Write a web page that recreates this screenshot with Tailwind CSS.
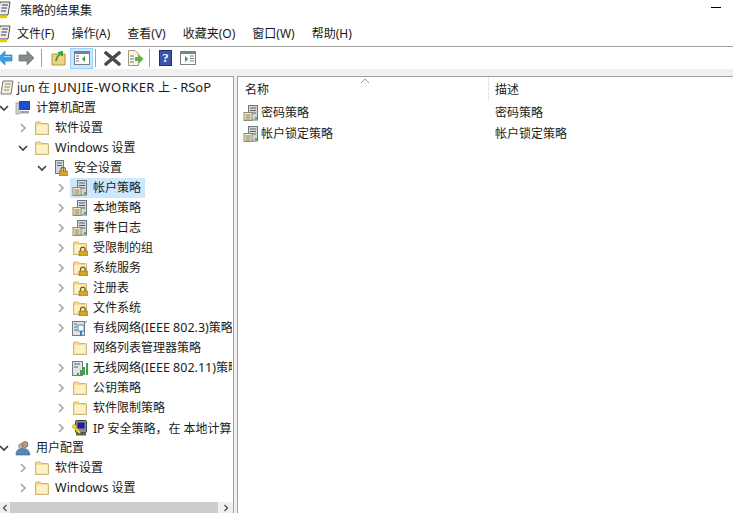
<!DOCTYPE html>
<html lang="zh">
<head>
  <meta charset="UTF-8">
  <title>策略的结果集</title>
  <script src="https://cdn.jsdelivr.net/npm/@tailwindcss/browser@4"></script>
</head>
<body class="w-[733px] h-[513px] overflow-hidden bg-white text-[12px] text-[#1a1a1a] font-['Noto_Sans','Noto_Sans_CJK_SC',sans-serif]">

  <!-- icon defs -->
  <svg class="hidden">
    <symbol id="folder" viewBox="0 0 16 16">
      <path d="M1.500 14.500V3Q1.500 2 2.500 2H6L7.500 3.500H13.500Q14.500 3.500 14.500 4.500V14.500Z" fill="#f5d98c" stroke="#cdb478"/>
      <path d="M2.500 5H13.500V13.500H2.500Z" fill="#fdf1c8"/>
    </symbol>
    <symbol id="lock" viewBox="0 0 16 16">
      <path d="M1.500 14.500V3Q1.500 2 2.500 2H6L7.500 3.500H13.500Q14.500 3.500 14.500 4.500V14.500Z" fill="#f5d98c" stroke="#cdb478"/>
      <path d="M2.500 5H13.500V13.500H2.500Z" fill="#fdf1c8"/>
      <path d="M8.500 11V9.500A2.300 2.300 0 0 1 13.100 9.500V11" fill="none" stroke="#7a5c18" stroke-width="1.200"/>
      <rect x="7" y="11" width="8.500" height="5" fill="#d9a520" stroke="#8a6a1f" stroke-width=".6"/>
    </symbol>
    <symbol id="policy" viewBox="0 0 16 16">
      <rect x="5.500" y=".5" width="9" height="14.500" fill="#d4d8dc" stroke="#6d7680"/>
      <path d="M7 3H13M7 5.500H13M7 8H13" stroke="#59626b"/>
      <rect x="1" y="7.500" width="8" height="8" fill="#f6ecc4" stroke="#8e8a70"/>
      <path d="M2.500 10H7.500M2.500 12H7.500M2.500 14H7.500" stroke="#7c7a66"/>
      <rect x="12" y="12" width="2" height="2" fill="#3fbf3f"/>
    </symbol>
    <symbol id="serverlock" viewBox="0 0 16 16">
      <rect x="2.500" y=".5" width="8" height="13" fill="#d4d8dc" stroke="#6d7680"/>
      <path d="M4 3H9M4 5.500H9" stroke="#59626b"/>
      <path d="M8 11V9.500A2.200 2.200 0 0 1 12.400 9.500V11" fill="none" stroke="#8a6a1f" stroke-width="1.200"/>
      <rect x="6.500" y="11" width="8" height="5" fill="#d9a520" stroke="#8a6a1f" stroke-width=".6"/>
    </symbol>
    <symbol id="wired" viewBox="0 0 16 16">
      <rect x=".5" y="1.500" width="12" height="14" fill="#dfe3e6" stroke="#747c84"/>
      <path d="M2 4H5M2 7H5M2 10H5" stroke="#59626b"/>
      <rect x="6" y="5" width="6" height="6" fill="#fff" stroke="#3f8fbf"/>
      <path d="M9 11V15" stroke="#2f7fb5" stroke-width="2"/>
      <path d="M13 3L15 1" stroke="#888"/>
    </symbol>
    <symbol id="wireless" viewBox="0 0 16 16">
      <rect x=".5" y="1.500" width="10" height="14" fill="#dfe3e6" stroke="#747c84"/>
      <path d="M2 4H8M2 7H6" stroke="#59626b"/>
      <path d="M5 15V13H7V15ZM8 15V10H10V15ZM11 15V7H13V15ZM14 15V3H16V15Z" fill="#3fa63f"/>
    </symbol>
    <symbol id="ipsec" viewBox="0 0 16 16">
      <rect x="3.500" y=".5" width="11" height="12" rx="1" fill="#8b8f8b" stroke="#3e423e"/>
      <rect x="5.500" y="2.500" width="7" height="6" fill="#1e1e9e"/>
      <rect x="4" y="12.500" width="10" height="3" fill="#5c605c"/>
      <path d="M1 6L8 13" stroke="#f2e21a" stroke-width="2"/>
      <circle cx="2.500" cy="6.500" r="2" fill="#f2e21a" stroke="#8a8410" stroke-width=".5"/>
    </symbol>
    <symbol id="closed" viewBox="0 0 10 10"><path d="M3 1L7 5L3 9" fill="none" stroke="#a6a6a6" stroke-width="1.600"/></symbol>
    <symbol id="open" viewBox="0 0 10 10"><path d="M1 3L5 7L9 3" fill="none" stroke="#404040" stroke-width="1.600"/></symbol>
    <symbol id="scroll" viewBox="0 0 16 19">
      <path d="M4 1H14L12 14H2Z" fill="#f4efd8" stroke="#555"/>
      <path d="M6 4H12M5.500 7H11M5 10H10" stroke="#2a2ab0" stroke-width="1.200"/>
      <path d="M1 16H11" stroke="#e8c800" stroke-width="2.400"/>
    </symbol>
  </svg>

  <!-- title bar -->
  <div class="h-[21px] flex items-center relative">
    <svg class="w-4 h-[19px] -ml-1 shrink-0"><use href="#scroll"/></svg>
    <span class="ml-2">策略的结果集</span>
    <div class="absolute right-[12px] top-[7px] w-[10px] h-px bg-black"></div>
  </div>

  <!-- menu bar -->
  <div class="h-[26px] flex items-center border-b border-[#a0a0a0] pt-[1px]">
    <svg class="w-4 h-[19px] -ml-1 shrink-0"><use href="#scroll"/></svg>
    <div class="flex ml-[5px] gap-[17px]">
      <span>文件(F)</span><span>操作(A)</span><span>查看(V)</span><span>收藏夹(O)</span><span>窗口(W)</span><span>帮助(H)</span>
    </div>
  </div>

  <!-- toolbar -->
  <div class="h-[22px] flex items-center">
    <svg class="w-[13px] h-4 shrink-0" viewBox="0 0 13 16"><path d="M5 1L-2 8L5 15V11H12V5H5Z" fill="#35a2ea" stroke="#1d70b0" stroke-width=".6"/><path d="M4 6.500H11" stroke="#a8dcfa"/></svg>
    <svg class="w-[17px] h-4 ml-[5px] shrink-0" viewBox="0 0 17 16"><path d="M1 5H9V1L16 8L9 15V11H1Z" fill="#858a8a" stroke="#5d6060" stroke-width=".6"/></svg>
    <div class="w-px h-[18px] bg-[#a0a0a0] ml-[6px]"></div>
    <svg class="w-[15px] h-4 ml-[9px] shrink-0" viewBox="0 0 15 16"><path d="M1 4H14V15H1Z" fill="#f1d083" stroke="#b8953f"/><path d="M5 11Q6 5 10 4M7 3L11 2L11 6" fill="none" stroke="#2fa02f" stroke-width="1.800"/></svg>
    <div class="w-[23px] h-[21px] ml-[4px] flex items-center justify-center bg-[#cce8ff] border border-[#99d1ff]">
      <svg class="w-4 h-[14px]" viewBox="0 0 16 14"><rect x=".5" y=".5" width="15" height="13" fill="#fff" stroke="#7a8288"/><rect x="1" y="1" width="14" height="2" fill="#7a8288"/><path d="M2 5H5M2 7.500H5M2 10H5" stroke="#6a7a88"/><path d="M11 5V11L8 8Z" fill="#2fa02f"/></svg>
    </div>
    <div class="w-px h-[18px] bg-[#a0a0a0] ml-[2px]"></div>
    <svg class="w-[17px] h-[15px] ml-[8px] shrink-0" viewBox="0 0 17 15"><path d="M2 2L15 13M15 2L2 13" stroke="#4a4a4a" stroke-width="3.600" stroke-linecap="round"/></svg>
    <svg class="w-[17px] h-4 ml-[6px] shrink-0" viewBox="0 0 17 16"><path d="M1.500 .5H8L11.500 4V15.500H1.500Z" fill="#f8f4e4" stroke="#a09a80"/><path d="M3 6H7M3 9H7M3 12H7" stroke="#777"/><path d="M8 7H12V4.500L16.500 9L12 13.500V11H8Z" fill="#55b845"/></svg>
    <div class="w-px h-[18px] bg-[#a0a0a0] ml-[5px]"></div>
    <div class="w-[13px] h-4 ml-[9px] bg-[#3c55a8] border border-[#1f2f70] text-white font-bold text-[13px] leading-[14px] text-center font-['Liberation_Serif',serif]">?</div>
    <svg class="w-4 h-[14px] ml-[8px] shrink-0" viewBox="0 0 16 14"><rect x=".5" y=".5" width="15" height="13" fill="#fff" stroke="#7a8288"/><rect x="1" y="1" width="14" height="2" fill="#7a8288"/><path d="M10 5H14M10 7.500H14M10 10H14" stroke="#6a7a88"/><path d="M5 5V11L8 8Z" fill="#2fa02f"/></svg>
  </div>

  <!-- panes -->
  <div class="h-[444px] bg-[#f0f0f0] pt-[7px] flex">
    <!-- tree -->
    <div class="w-[234px] h-full shrink-0 bg-white border-t border-r border-[#a0a0a0] flex flex-col relative">
      <div class="flex-1 overflow-hidden pt-[1px] w-[232px]">
        <div class="h-5 flex items-center whitespace-nowrap"><svg class="w-4 h-4 -ml-[1px] shrink-0" viewBox="0 0 16 16"><path d="M4 1H14L12 14H2Z" fill="#f4efd8" stroke="#777"/><path d="M6 4H12M5.500 7H11M5 10H10" stroke="#888"/></svg><span class="ml-[2px]">jun 在 <span class="text-[13px] tracking-[.45px]">JUNJIE-WORKER</span> 上 - <span class="text-[13px]">RSoP</span></span></div>

        <div class="h-5 flex items-center whitespace-nowrap"><svg class="w-2.5 h-2.5 ml-[-1px] shrink-0"><use href="#open"/></svg><svg class="w-4 h-4 ml-[6px] shrink-0" viewBox="0 0 16 16"><rect x="4.500" y="1.500" width="10" height="8" fill="#1a4fd0" stroke="#444"/><rect x="1" y="3" width="3" height="11" fill="#d8dce0" stroke="#777" stroke-width=".6"/><rect x="5" y="11" width="9" height="2.500" fill="#9aa4ae"/></svg><span class="ml-[5px]">计算机配置</span></div>

        <div class="h-5 flex items-center whitespace-nowrap"><svg class="w-2.5 h-2.5 ml-[18px] shrink-0"><use href="#closed"/></svg><svg class="w-4 h-4 ml-[6px] shrink-0"><use href="#folder"/></svg><span class="ml-[5px]">软件设置</span></div>
        <div class="h-5 flex items-center whitespace-nowrap"><svg class="w-2.5 h-2.5 ml-[18px] shrink-0"><use href="#open"/></svg><svg class="w-4 h-4 ml-[6px] shrink-0"><use href="#folder"/></svg><span class="ml-[5px]"><span class="text-[12.500px]">Windows</span> 设置</span></div>
        <div class="h-5 flex items-center whitespace-nowrap"><svg class="w-2.5 h-2.5 ml-[37px] shrink-0"><use href="#open"/></svg><svg class="w-4 h-4 ml-[6px] shrink-0"><use href="#serverlock"/></svg><span class="ml-[5px]">安全设置</span></div>

        <div class="h-5 flex items-center whitespace-nowrap"><svg class="w-2.5 h-2.5 ml-[56px] shrink-0"><use href="#closed"/></svg><div class="flex items-center h-5 bg-[#cce8ff] ml-[4px] pl-[2px] pr-[4px]"><svg class="w-4 h-4 shrink-0"><use href="#policy"/></svg><span class="ml-[5px]">帐户策略</span></div></div>
        <div class="h-5 flex items-center whitespace-nowrap"><svg class="w-2.5 h-2.5 ml-[56px] shrink-0"><use href="#closed"/></svg><svg class="w-4 h-4 ml-[6px] shrink-0"><use href="#policy"/></svg><span class="ml-[5px]">本地策略</span></div>
        <div class="h-5 flex items-center whitespace-nowrap"><svg class="w-2.5 h-2.5 ml-[56px] shrink-0"><use href="#closed"/></svg><svg class="w-4 h-4 ml-[6px] shrink-0"><use href="#policy"/></svg><span class="ml-[5px]">事件日志</span></div>
        <div class="h-5 flex items-center whitespace-nowrap"><svg class="w-2.5 h-2.5 ml-[56px] shrink-0"><use href="#closed"/></svg><svg class="w-4 h-4 ml-[6px] shrink-0"><use href="#lock"/></svg><span class="ml-[5px]">受限制的组</span></div>
        <div class="h-5 flex items-center whitespace-nowrap"><svg class="w-2.5 h-2.5 ml-[56px] shrink-0"><use href="#closed"/></svg><svg class="w-4 h-4 ml-[6px] shrink-0"><use href="#lock"/></svg><span class="ml-[5px]">系统服务</span></div>
        <div class="h-5 flex items-center whitespace-nowrap"><svg class="w-2.5 h-2.5 ml-[56px] shrink-0"><use href="#closed"/></svg><svg class="w-4 h-4 ml-[6px] shrink-0"><use href="#lock"/></svg><span class="ml-[5px]">注册表</span></div>
        <div class="h-5 flex items-center whitespace-nowrap"><svg class="w-2.5 h-2.5 ml-[56px] shrink-0"><use href="#closed"/></svg><svg class="w-4 h-4 ml-[6px] shrink-0"><use href="#lock"/></svg><span class="ml-[5px]">文件系统</span></div>
        <div class="h-5 flex items-center whitespace-nowrap"><svg class="w-2.5 h-2.5 ml-[56px] shrink-0"><use href="#closed"/></svg><svg class="w-4 h-4 ml-[6px] shrink-0"><use href="#wired"/></svg><span class="ml-[5px]">有线网络<span class="text-[12.500px]">(IEEE 802.3)</span>策略</span></div>
        <div class="h-5 flex items-center whitespace-nowrap"><svg class="w-4 h-4 ml-[72px] shrink-0"><use href="#folder"/></svg><span class="ml-[5px]">网络列表管理器策略</span></div>
        <div class="h-5 flex items-center whitespace-nowrap"><svg class="w-2.5 h-2.5 ml-[56px] shrink-0"><use href="#closed"/></svg><svg class="w-4 h-4 ml-[6px] shrink-0"><use href="#wireless"/></svg><span class="ml-[5px]">无线网络<span class="text-[12.500px]">(IEEE 802.11)</span>策略</span></div>
        <div class="h-5 flex items-center whitespace-nowrap"><svg class="w-2.5 h-2.5 ml-[56px] shrink-0"><use href="#closed"/></svg><svg class="w-4 h-4 ml-[6px] shrink-0"><use href="#folder"/></svg><span class="ml-[5px]">公钥策略</span></div>
        <div class="h-5 flex items-center whitespace-nowrap"><svg class="w-2.5 h-2.5 ml-[56px] shrink-0"><use href="#closed"/></svg><svg class="w-4 h-4 ml-[6px] shrink-0"><use href="#folder"/></svg><span class="ml-[5px]">软件限制策略</span></div>
        <div class="h-5 flex items-center whitespace-nowrap"><svg class="w-2.5 h-2.5 ml-[56px] shrink-0"><use href="#closed"/></svg><svg class="w-4 h-4 ml-[6px] shrink-0"><use href="#ipsec"/></svg><span class="ml-[5px]">IP 安全策略<span class="font-['Noto_Sans_CJK_TC',sans-serif] mr-[1px]">，</span>在 本地计算机</span></div>

        <div class="h-5 flex items-center whitespace-nowrap"><svg class="w-2.5 h-2.5 ml-[-1px] shrink-0"><use href="#open"/></svg><svg class="w-4 h-4 ml-[6px] shrink-0" viewBox="0 0 16 16"><circle cx="6" cy="6" r="2.500" fill="#b0b8c0" stroke="#666" stroke-width=".5"/><circle cx="10" cy="4.500" r="3" fill="#c89a70" stroke="#444" stroke-width=".6"/><path d="M1 15Q1 9 5 9L8 8.500Q14 8 15 15Z" fill="#5c86b8" stroke="#3c5c88" stroke-width=".6"/></svg><span class="ml-[5px]">用户配置</span></div>
        <div class="h-5 flex items-center whitespace-nowrap"><svg class="w-2.5 h-2.5 ml-[18px] shrink-0"><use href="#closed"/></svg><svg class="w-4 h-4 ml-[6px] shrink-0"><use href="#folder"/></svg><span class="ml-[5px]">软件设置</span></div>
        <div class="h-5 flex items-center whitespace-nowrap"><svg class="w-2.5 h-2.5 ml-[18px] shrink-0"><use href="#closed"/></svg><svg class="w-4 h-4 ml-[6px] shrink-0"><use href="#folder"/></svg><span class="ml-[5px]"><span class="text-[12.500px]">Windows</span> 设置</span></div>
      </div>
      <!-- scrollbar -->
      <div class="h-[11px] absolute left-0 right-0 bottom-0 bg-[#f0f0f0] flex items-center">
        <span class="w-[10px] h-full flex items-center justify-center"><svg class="w-2 h-2" viewBox="0 0 8 8"><path d="M5.500 1L2.500 4L5.500 7" fill="none" stroke="#505050" stroke-width="1.300"/></svg></span>
        <div class="w-[208px] h-full bg-[#cdcdcd]"></div>
        <span class="flex-1 h-full flex items-center justify-center"><svg class="w-2 h-2" viewBox="0 0 8 8"><path d="M2.500 1L5.500 4L2.500 7" fill="none" stroke="#505050" stroke-width="1.300"/></svg></span>
      </div>
    </div>

    <!-- list -->
    <div class="w-[3px] shrink-0"></div>
    <div class="flex-1 bg-white border-t border-l border-[#a0a0a0] relative">
      <svg class="absolute left-[122px] top-[1px] w-[10px] h-[6px]" viewBox="0 0 10 6"><path d="M1 5L5 1L9 5" fill="none" stroke="#9a9a9a"/></svg>
      <div class="flex h-[24px] items-center">
        <div class="w-[251px] h-[24px] pl-[7px] flex items-center border-r border-[#e5e5e5] pt-[2px]">名称</div>
        <div class="pl-[6px] pt-[2px]">描述</div>
      </div>
      <div class="h-[21px] flex items-center mt-[1px]"><div class="w-[251px] flex items-center pl-[5px]"><svg class="w-4 h-4 shrink-0"><use href="#policy"/></svg><span class="ml-[2px]">密码策略</span></div><span class="pl-[6px]">密码策略</span></div>
      <div class="h-[21px] flex items-center"><div class="w-[251px] flex items-center pl-[5px]"><svg class="w-4 h-4 shrink-0"><use href="#policy"/></svg><span class="ml-[2px]">帐户锁定策略</span></div><span class="pl-[6px]">帐户锁定策略</span></div>
    </div>
  </div>

</body>
</html>
